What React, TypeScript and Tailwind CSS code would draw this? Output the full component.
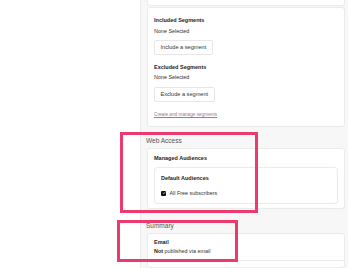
import React from "react";

const F = { fontFamily: '"Liberation Sans", Arial, sans-serif' };

export default function App() {
  return (
    <div className="relative w-[348px] h-[268px] overflow-hidden bg-white flex" style={F}>
      <div className="w-[140px] shrink-0 bg-white" />
      <div className="flex-1 bg-[#f7f7f7] border-l border-[#ececec] pl-[6px] pr-[3px] flex flex-col">
        {/* top card remnant + segments */}
        <div className="shrink-0 bg-white border-x border-b border-[#ebebeb] rounded-b-[3px] h-[6px]" />
        <div className="shrink-0 mt-[1px] bg-white border border-[#ebebeb] rounded-[3px] pl-[6px] pt-[9px] flex flex-col items-start h-[120px]">
          <div className="text-[5.5px] leading-[7px] font-bold text-[#1c1c1c]">Included Segments</div>
          <div className="mt-[3.5px] text-[5.4px] leading-[7px] text-[#333]">None Selected</div>
          <div className="mt-[5.5px] h-[15px] px-[5.5px] flex items-center border border-[#e6e6e6] rounded-[2px] text-[5.6px] text-[#333] bg-white">Include a segment</div>
          <div className="mt-[8.5px] text-[5.5px] leading-[7px] font-bold text-[#1c1c1c]">Excluded Segments</div>
          <div className="mt-[3.5px] text-[5.4px] leading-[7px] text-[#333]">None Selected</div>
          <div className="mt-[5.5px] h-[15px] px-[5.5px] flex items-center border border-[#e6e6e6] rounded-[2px] text-[5.6px] text-[#333] bg-white">Exclude a segment</div>
          <div className="mt-[10.5px] text-[4.7px] leading-[6px] text-[#a07a8b] underline">Create and manage segments</div>
        </div>

        <div className="shrink-0 mt-[10px] text-[6.5px] leading-[8px] text-[#555] -ml-[1px]">Web Access</div>
        <div className="shrink-0 mt-[3px] bg-white border border-[#ebebeb] rounded-[3px] pt-[6px] pb-[4.5px] px-[6px] flex flex-col">
          <div className="text-[5.5px] leading-[7px] font-bold text-[#1c1c1c]">Managed Audiences</div>
          <div className="mt-[5px] border border-[#ebebeb] rounded-[3px] pl-[6px] pt-[6.5px] pb-[6px] flex flex-col">
            <div className="text-[5.5px] leading-[7px] font-bold text-[#1c1c1c]">Default Audiences</div>
            <div className="mt-[8px] flex items-center gap-[3.5px]">
              <div className="w-[5px] h-[5px] bg-[#111] rounded-[1px] flex items-center justify-center">
                <svg width="4" height="4" viewBox="0 0 10 10">
                  <path d="M2 5.2 L4.2 7.3 L8 2.8" stroke="white" strokeWidth="1.6" fill="none" />
                </svg>
              </div>
              <div className="text-[5.4px] leading-[7px] text-[#333]">All Free subscribers</div>
            </div>
          </div>
        </div>

        <div className="shrink-0 mt-[13px] text-[6.5px] leading-[8px] text-[#555] -ml-[1px]">Summary</div>
        <div className="mt-[2.7px] bg-white border border-[#ebebeb] rounded-[3px] flex flex-col flex-1">
          <div className="pl-[6px] pt-[5.5px] pb-[5px] border-b border-[#ebebeb]">
            <div className="text-[5.5px] leading-[7px] font-bold text-[#1c1c1c]">Email</div>
            <div className="mt-[2px] text-[5.4px] leading-[7px] text-[#333]">
              <span className="font-bold text-[#1c1c1c]">Not</span> published via email
            </div>
          </div>
        </div>
      </div>

      <div className="absolute left-[120px] top-[131.5px] w-[138px] h-[81px] border-[3px] border-[#ec3a6e] pointer-events-none" />
      <div className="absolute left-[116.5px] top-[219.5px] w-[121px] h-[42px] border-[3px] border-[#ec3a6e] pointer-events-none" />
    </div>
  );
}
